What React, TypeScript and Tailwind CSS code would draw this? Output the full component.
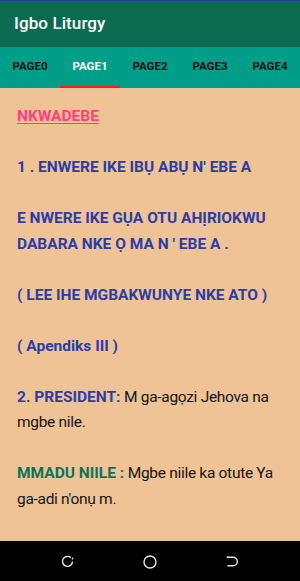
import React from "react";

const tabs = ["PAGE0", "PAGE1", "PAGE2", "PAGE3", "PAGE4"];

export default function App() {
  const blue = "text-[#2b3ea6]";
  return (
    <div
      className="w-[300px] h-[581px] flex flex-col overflow-hidden bg-[#efc396]"
      style={{ fontFamily: "Roboto, 'Noto Sans', sans-serif" }}
    >
      <div className="h-[1px] bg-[#2c3e9c]" />
      <div className="h-[46px] bg-[#0b6b51] flex items-center px-[14px]">
        <span className="text-white text-[17px] font-medium tracking-[0.1px]">Igbo Liturgy</span>
      </div>
      <div className="h-[41px] bg-[#009e89] flex">
        {tabs.map((t, i) => (
          <div key={t} className="w-[60px] flex flex-col">
            <div
              className={`flex-1 flex items-center justify-center text-[11.5px] font-bold ${
                i === 1 ? "text-white" : "text-[#111]"
              }`}
            >
              {t}
            </div>
            <div className={`h-[2px] ${i === 1 ? "bg-[#ff1a1a]" : ""}`} />
          </div>
        ))}
      </div>
      <div className="flex-1 px-[17px] pt-[16px] text-[15.5px] leading-[25.5px] text-[#151515] tracking-[-0.3px]">
        <p className="font-bold tracking-[0px] text-[#ff4081] underline decoration-[#ff4081] underline-offset-[2px]">NKWADEBE</p>
        <p className="h-[25.5px]" />
        <p className={`font-bold tracking-[0px] ${blue}`}>1 . ENWERE IKE IBỤ ABỤ N' EBE A</p>
        <p className="h-[25.5px]" />
        <p className={`font-bold tracking-[0px] ${blue}`}>E NWERE IKE GỤA OTU AHỊRIOKWU DABARA NKE Ọ MA N ' EBE A .</p>
        <p className="h-[25.5px]" />
        <p className={`font-bold tracking-[0px] ${blue}`}>( LEE IHE MGBAKWUNYE NKE ATO )</p>
        <p className="h-[25.5px]" />
        <p className={`font-bold tracking-[0px] ${blue}`}>( Apendiks III )</p>
        <p className="h-[25.5px]" />
        <p>
          <span className={`font-bold tracking-[0px] ${blue}`}>2. PRESIDENT:</span> M ga-agọzi Jehova na mgbe nile.
        </p>
        <p className="h-[25.5px]" />
        <p>
          <span className="font-bold tracking-[0px] text-[#0c7356]">MMADU NIILE :</span> Mgbe niile ka otute Ya ga-adi n'onụ m.
        </p>
      </div>
      <div className="h-[40px] bg-black flex items-center">
        <div className="w-full flex justify-between items-center pl-[61px] pr-[61px] pt-[1px]">
          <svg width="13" height="13" viewBox="0 0 13 13" fill="none" stroke="#e6e6e6" strokeWidth="1.4">
            <path d="M9.8 2.6 A5 5 0 1 0 11.5 6.5" />
            <path d="M11.5 2.5 L11.5 4.5" />
          </svg>
          <svg width="14" height="14" viewBox="0 0 14 14" fill="none" stroke="#e6e6e6" strokeWidth="1.4">
            <circle cx="7" cy="7" r="6" />
          </svg>
          <svg width="13" height="13" viewBox="0 0 13 13" fill="none" stroke="#e6e6e6" strokeWidth="1.4">
            <path d="M1.5 1.2 L1.5 2.2 L7 2.2 A4.3 4.3 0 0 1 7 10.8 L1.5 10.8" />
          </svg>
        </div>
      </div>
    </div>
  );
}
